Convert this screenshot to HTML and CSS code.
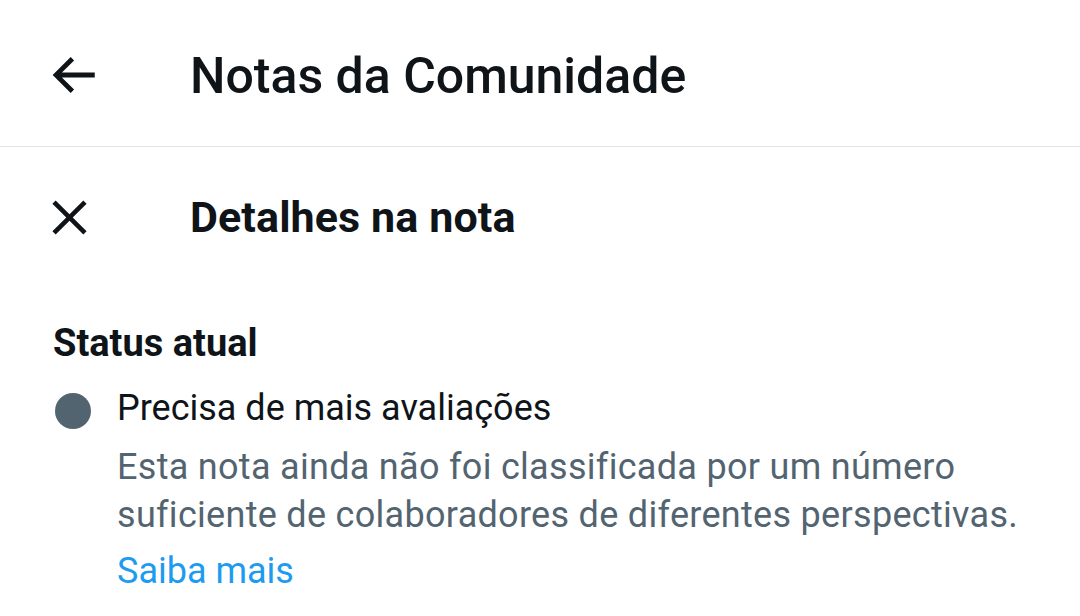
FILE: index.html
```html
<!DOCTYPE html>
<html lang="pt">
<head>
<meta charset="utf-8">
<link rel="stylesheet" href="styles.css">
</head>
<body>
<header class="topbar">
  <div class="icon-cell">
    <svg class="icon icon-back" viewBox="0 0 24 24" width="58" height="58"><path d="M7.414 13l5.043 5.04-1.414 1.42L3.586 12l7.457-7.46 1.414 1.42L7.414 11H21v2H7.414z" fill="#0f1419"/></svg>
  </div>
  <h1 class="title">Notas da Comunidade</h1>
</header>
<section class="subbar">
  <div class="icon-cell">
    <svg class="icon icon-close" viewBox="0 0 24 24" width="55" height="55"><path d="M10.59 12L4.54 5.96l1.42-1.42L12 10.59l6.04-6.05 1.42 1.42L13.41 12l6.05 6.04-1.42 1.42L12 13.41l-6.04 6.05-1.42-1.42L10.59 12z" fill="#0f1419"/></svg>
  </div>
  <h2 class="subtitle">Detalhes na nota</h2>
</section>
<section class="status">
  <h3 class="status-heading">Status atual</h3>
  <div class="status-row">
    <span class="dot"></span>
    <div class="status-body">
      <p class="status-label">Precisa de mais avaliações</p>
      <p class="status-desc">Esta nota ainda não foi classificada por um número suficiente de colaboradores de diferentes perspectivas.</p>
      <a class="learn" href="#">Saiba mais</a>
    </div>
  </div>
</section>
</body>
</html>
```
FILE: styles.css
```css
html, body {
  margin: 0;
  padding: 0;
  background: #ffffff;
  font-family: Roboto, "Noto Sans", sans-serif;
  color: #0f1419;
}
.topbar {
  height: 146px;
  display: flex;
  align-items: center;
  border-bottom: 1px solid #e1e4e6;
}
.icon-cell {
  width: 190px;
  flex: none;
  box-sizing: border-box;
  display: flex;
  align-items: center;
}
.icon { display: block; }
.icon-back { margin-left: 44px; margin-top: 4px; }
.icon-close { margin-left: 42px; }
.title {
  margin: 0;
  margin-top: 6px;
  font-size: 50px;
  font-weight: 500;
  letter-spacing: 0;
}
.subbar {
  height: 140px;
  display: flex;
  align-items: center;
}
.subtitle {
  margin: 0;
  font-size: 43px;
  font-weight: 700;
  letter-spacing: 0.1px;
}
.status {
  padding: 34px 53px 0;
}
.status-heading {
  margin: 0 0 18px;
  font-size: 38px;
  font-weight: 700;
  line-height: 44px;
}
.status-row {
  display: flex;
  align-items: flex-start;
  gap: 26px;
}
.dot {
  flex: none;
  width: 36px;
  height: 36px;
  border-radius: 50%;
  background: #536471;
  margin-top: 10px;
  margin-left: 2px;
}
.status-body { flex: 1; }
.status-label {
  margin: 0 0 10px;
  font-size: 36px;
  line-height: 50px;
}
.status-desc {
  margin: 0;
  font-size: 36px;
  line-height: 48px;
  letter-spacing: 0.3px;
  color: #536471;
  max-width: 920px;
}
.learn {
  display: block;
  margin-top: 8px;
  font-size: 36px;
  line-height: 48px;
  color: #1d9bf0;
  text-decoration: none;
}
```
